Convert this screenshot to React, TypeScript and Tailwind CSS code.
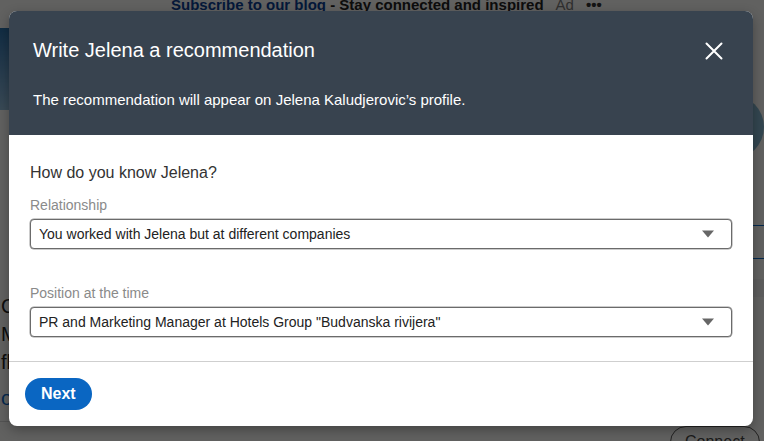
import React from 'react';

const font = { fontFamily: '"Liberation Sans", Arial, sans-serif' };

const Caret = () => (
  <svg width="14" height="8" viewBox="0 0 14 8" className="shrink-0">
    <path d="M1 0.5h12L7 7.5z" fill="#666666" />
  </svg>
);

const SelectBox = ({ value }: { value: string }) => (
  <div className="flex h-[30px] items-center justify-between rounded-[4px] border border-[#6b6b6b] bg-white pl-[8px] pr-[16px] shadow-[0_0_0_0.5px_#9a9a9a]">
    <span className="text-[14px] text-[#222]">{value}</span>
    <Caret />
  </div>
);

const Field = ({ label, value }: { label: string; value: string }) => (
  <div className="flex flex-col">
    <span className="h-[20px] text-[14px] leading-[20px] text-[#8a8a8a]">{label}</span>
    <div className="mt-[4px]">
      <SelectBox value={value} />
    </div>
  </div>
);

// page behind the dialog, mostly covered
const BackgroundPage = () => (
  <div className="flex h-[441px] flex-col overflow-hidden bg-[#f3f2ef]">
    <div className="flex h-[11px] shrink-0 items-end gap-[12px] overflow-hidden pl-[171px] text-[15px] leading-[12px]">
      <span className="font-bold text-[#0a3d8f]">
        Subscribe to our blog <span className="text-[#222]">- Stay connected and inspired</span>
      </span>
      <span className="text-[#777]">Ad</span>
      <span className="font-bold text-[#333]">•••</span>
    </div>
    <div className="flex min-h-0 flex-1">
      <div className="flex w-[622px] flex-col">
        <div className="mt-[17px] h-[82px] shrink-0 bg-gradient-to-b from-[#2a6fa8] to-[#8fb8d6]" />
        <div className="flex flex-col gap-[6px] pl-[1px] pt-[185px] text-[20px] leading-[22px] text-[#222]">
          <span>C</span>
          <span>Ma</span>
          <span>flu</span>
          <span className="mt-[8px] text-[#0a66c2]">o</span>
        </div>
        <div className="mt-[12px] h-[1px] shrink-0 bg-[#cfcfcf]" />
      </div>
      <div className="flex flex-1 flex-col pl-[128px] pt-[84px]">
        <div className="h-[64px] w-[64px] shrink-0 rounded-full bg-[#7fb0c8]" />
        <span className="mt-[30px] text-[16px] text-[#333]">ca</span>
        <div className="mt-[12px] flex h-[34px] shrink-0 items-center border-y border-[#0a66c2] text-[18px] font-semibold text-[#0a66c2]">
          st
        </div>
        <div className="mt-[20px] h-[18px] shrink-0 bg-[#e8e8e8]" />
        <span className="mt-[18px] text-[16px] font-semibold text-[#222]">ve</span>
        <span className="mt-[28px] text-[14px] font-semibold text-[#222]">an</span>
        <span className="text-[13px] text-[#666]">ag</span>
        <div className="-ml-[30px] mt-[18px] flex h-[32px] w-[90px] shrink-0 items-center rounded-full border border-[#555] pl-[14px] text-[16px] text-[#444]">
          Connect
        </div>
      </div>
    </div>
  </div>
);

export default function App() {
  return (
    <div className="relative h-[441px] w-[764px] overflow-hidden" style={font}>
      <BackgroundPage />
      <div className="absolute inset-0 bg-black/60" />
      <div className="absolute left-[9px] top-[11px] flex w-[744px] flex-col overflow-hidden rounded-[8px] bg-white shadow-[0_4px_12px_rgba(0,0,0,0.3)]">
        <div className="flex h-[124px] flex-col bg-[#38434f] pl-[24px] pr-[30px] text-white">
          <div className="mt-[25px] flex h-[28px] items-center justify-between">
            <h2 className="text-[20px] leading-[28px]">Write Jelena a recommendation</h2>
            <svg width="18" height="18" viewBox="0 0 18 18" className="mt-[2px]">
              <path d="M1.5 1.5l15 15M16.5 1.5l-15 15" stroke="#fff" strokeWidth="2" strokeLinecap="round" />
            </svg>
          </div>
          <p className="mt-[26px] text-[15px] leading-[20px]">
            The recommendation will appear on Jelena Kaludjerovic’s profile.
          </p>
        </div>
        <div className="flex flex-col px-[21px] pt-[26px]">
          <p className="text-[16px] leading-[24px] text-[#333]">How do you know Jelena?</p>
          <div className="mt-[10px]">
            <Field label="Relationship" value="You worked with Jelena but at different companies" />
          </div>
          <div className="mt-[34px]">
            <Field label="Position at the time" value={'PR and Marketing Manager at Hotels Group "Budvanska rivijera"'} />
          </div>
        </div>
        <div className="mt-[24px] border-t border-[#cfcfcf] px-[16px] pb-[16px] pt-[16px]">
          <button className="h-[32px] rounded-full bg-[#0a66c2] px-[16px] text-[16px] font-bold text-white">
            Next
          </button>
        </div>
      </div>
    </div>
  );
}
